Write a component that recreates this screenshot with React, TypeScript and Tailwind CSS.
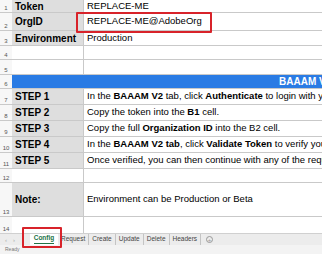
import React from "react";

type Row = {
  n: number;
  h: string;
  a?: React.ReactNode;
  b?: React.ReactNode;
  gray?: boolean;
};

const rows: Row[] = [
  { n: 1, h: "h-[13px]", a: "Token", b: "REPLACE-ME", gray: true },
  { n: 2, h: "h-[18px]", a: "OrgID", b: "REPLACE-ME@AdobeOrg", gray: true },
  { n: 3, h: "h-[15px]", a: "Environment", b: "Production", gray: true },
  { n: 4, h: "h-[14px]" },
  { n: 5, h: "h-[15px]" },
];

const steps: Row[] = [
  {
    n: 7,
    h: "h-[16px]",
    a: "STEP 1",
    b: (
      <>
        In the <b>BAAAM V2</b> tab, click <b>Authenticate</b> to login with your Adobe ID
      </>
    ),
  },
  {
    n: 8,
    h: "h-[16px]",
    a: "STEP 2",
    b: (
      <>
        Copy the token into the <b>B1</b> cell.
      </>
    ),
  },
  {
    n: 9,
    h: "h-[16px]",
    a: "STEP 3",
    b: (
      <>
        Copy the full <b>Organization ID</b> into the B2 cell.
      </>
    ),
  },
  {
    n: 10,
    h: "h-[16px]",
    a: "STEP 4",
    b: (
      <>
        In the <b>BAAAM V2 tab</b>, click <b>Validate Token</b> to verify your token
      </>
    ),
  },
  {
    n: 11,
    h: "h-[16px]",
    a: "STEP 5",
    b: <>Once verified, you can then continue with any of the requests</>,
  },
];

const SheetRow = ({ row }: { row: Row }) => (
  <div className={`flex ${row.h} border-b border-[#c9c9c9]`}>
    <div className="w-[12px] shrink-0 flex items-end justify-center pb-[1px] text-[6px] leading-none text-[#555] bg-[#f7f7f7]">
      {row.n}
    </div>
    <div
      className={`w-[72px] shrink-0 flex items-center pl-[3px] border-r border-[#c9c9c9] font-bold text-[10px] text-black ${
        row.gray ? "bg-[#dedede]" : "bg-white"
      }`}
    >
      {row.a}
    </div>
    <div className="flex-1 min-w-0 flex items-center pl-[3px] text-[9.5px] text-black bg-white whitespace-nowrap overflow-hidden">
      <span>{row.b}</span>
    </div>
  </div>
);

const tabs = ["Request", "Create", "Update", "Delete", "Headers"];

export default function App() {
  return (
    <div
      className="relative w-[322px] h-[254px] overflow-hidden bg-white flex flex-col"
      style={{ fontFamily: '"Liberation Sans", Arial, sans-serif' }}
    >
      {rows.map((r) => (
        <SheetRow key={r.n} row={r} />
      ))}

      {/* merged title row */}
      <div className="flex h-[14px] border-b border-[#c9c9c9]">
        <div className="w-[12px] shrink-0 flex items-end justify-center pb-[1px] text-[6px] leading-none text-[#555] bg-[#f7f7f7]">
          6
        </div>
        <div className="flex-1 min-w-0 bg-[#2a7be4] flex items-center pl-[267px] text-[10px] font-bold text-white whitespace-nowrap overflow-hidden">
          <span>BAAAM V2 SETUP</span>
        </div>
      </div>

      {steps.map((r) => (
        <SheetRow key={r.n} row={{ ...r, gray: true }} />
      ))}

      <SheetRow row={{ n: 12, h: "h-[14px]" }} />
      <SheetRow
        row={{
          n: 13,
          h: "h-[34px]",
          a: "Note:",
          b: "Environment can be Production or Beta",
          gray: true,
        }}
      />
      <div className="flex h-[16px]">
        <div className="w-[12px] shrink-0 flex items-end justify-center pb-[1px] text-[6px] leading-none text-[#555] bg-[#f7f7f7]">
          14
        </div>
        <div className="w-[72px] shrink-0 border-r border-[#c9c9c9] bg-white" />
        <div className="flex-1 bg-white" />
      </div>

      {/* sheet tabs */}
      <div className="flex items-stretch h-[12px] bg-[#ececec] border-t border-[#d0d0d0] text-[6.5px] text-[#444] leading-none">
        <div className="w-[30px] flex items-center gap-[6px] pl-[5px] text-[#aaa] text-[6px]">
          <span>‹</span>
          <span>›</span>
        </div>
        <div className="flex flex-col items-center justify-center px-[3px] bg-white w-[28px]">
          <span className="font-bold text-[#217346] border-b border-[#217346] pb-[1px]">Config</span>
        </div>
        {tabs.map((t) => (
          <div key={t} className="flex items-center px-[3px] border-r border-[#c4c4c4]">
            {t}
          </div>
        ))}
        <div className="flex items-center pl-[5px]">
          <span className="w-[7px] h-[7px] rounded-full border border-[#999] flex items-center justify-center text-[6px] text-[#999] leading-none">
            +
          </span>
        </div>
      </div>

      {/* status bar */}
      <div className="flex-1 bg-[#f3f3f3] flex items-center pl-[5px] text-[5px] text-[#777]">
        Ready
      </div>

      {/* highlight boxes */}
      <div className="absolute left-[76px] top-[12px] w-[136px] h-[21px] border-2 border-[#d8232a] rounded-[1px]" />
      <div className="absolute left-[22px] top-[227px] w-[40px] h-[21px] border-2 border-[#d8232a] rounded-[1px]" />
    </div>
  );
}
